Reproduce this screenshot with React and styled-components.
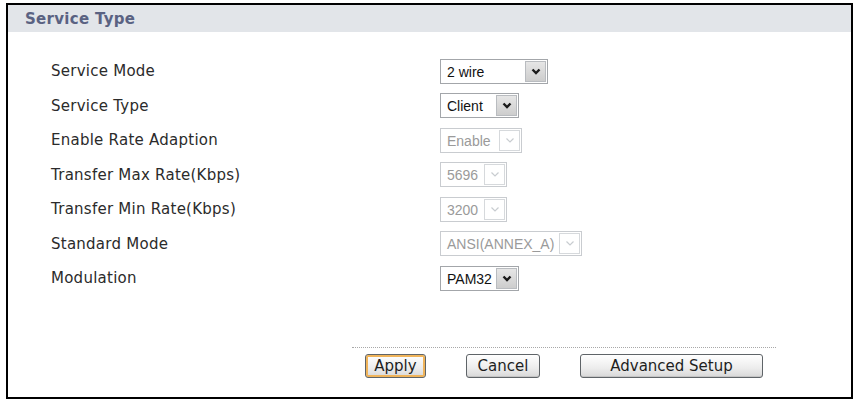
import React from 'react';
import styled, { createGlobalStyle } from 'styled-components';

const GlobalStyle = createGlobalStyle`
  html, body {
    margin: 0;
    padding: 0;
    background: #ffffff;
  }
  body {
    width: 856px;
    height: 401px;
    overflow: hidden;
  }
`;

const rows = [
  { label: 'Service Mode', value: '2 wire', width: 108 },
  { label: 'Service Type', value: 'Client', width: 79 },
  { label: 'Enable Rate Adaption', value: 'Enable', width: 82, disabled: true },
  { label: 'Transfer Max Rate(Kbps)', value: '5696', width: 67, disabled: true },
  { label: 'Transfer Min Rate(Kbps)', value: '3200', width: 67, disabled: true },
  { label: 'Standard Mode', value: 'ANSI(ANNEX_A)', width: 142, disabled: true },
  { label: 'Modulation', value: 'PAM32', width: 79 },
];

function Select({ value, width, disabled }) {
  return (
    <SelectBox $disabled={disabled} style={{ width }}>
      <SelectValue $disabled={disabled}>{value}</SelectValue>
      <ArrowButton $disabled={disabled}>
        <svg width="10" height="7" viewBox="0 0 10 7">
          <polyline
            points="1.5,1.5 5,5 8.5,1.5"
            fill="none"
            stroke={disabled ? '#c8ccd0' : '#1a1a1a'}
            strokeWidth={disabled ? 1.2 : 2.4}
          />
        </svg>
      </ArrowButton>
    </SelectBox>
  );
}

export default function App() {
  return (
    <>
      <GlobalStyle />
      <Frame>
        <Header>Service Type</Header>
        <Form>
          {rows.map((r) => (
            <Row key={r.label}>
              <Label>{r.label}</Label>
              <Select value={r.value} width={r.width} disabled={r.disabled} />
            </Row>
          ))}
        </Form>
        <Footer>
          <Button $primary>Apply</Button>
          <Button>Cancel</Button>
          <Button $wide>Advanced Setup</Button>
        </Footer>
      </Frame>
    </>
  );
}

const Frame = styled.div`
  box-sizing: border-box;
  margin: 3px 0 0 6px;
  width: 847px;
  height: 396px;
  border: 2px solid #000;
  display: flex;
  flex-direction: column;
  font-family: 'DejaVu Sans', Verdana, sans-serif;
`;

const Header = styled.div`
  height: 27px;
  background: #e2e5e9;
  color: #5a6282;
  font-weight: bold;
  font-size: 15px;
  letter-spacing: 0.3px;
  line-height: 28px;
  padding-left: 17px;
`;

const Form = styled.div`
  padding: 22px 0 0 43px;
  display: flex;
  flex-direction: column;
`;

const Row = styled.div`
  display: grid;
  grid-template-columns: 389px auto;
  align-items: center;
  height: 34.5px;
`;

const Label = styled.span`
  font-size: 15px;
  letter-spacing: 0.25px;
  color: #2b2b2b;
`;

const SelectBox = styled.div`
  box-sizing: border-box;
  height: 25px;
  display: flex;
  align-items: stretch;
  justify-content: space-between;
  border: 1px solid ${(p) => (p.$disabled ? '#c9ccd0' : '#a3a6aa')};
  background: #fff;
  padding: 1px;
`;

const SelectValue = styled.span`
  font-family: 'Liberation Sans', Arial, sans-serif;
  font-size: 14px;
  line-height: 22px;
  padding-left: 5px;
  white-space: nowrap;
  color: ${(p) => (p.$disabled ? '#9a9a9a' : '#111')};
`;

const ArrowButton = styled.span`
  box-sizing: border-box;
  flex: none;
  width: 21px;
  display: flex;
  align-items: center;
  justify-content: center;
  border: 1px solid ${(p) => (p.$disabled ? '#d6d9dc' : '#b9bcc0')};
  background: ${(p) =>
    p.$disabled ? '#fff' : 'linear-gradient(#e6e6e6, #cdcdcd)'};
`;

const Footer = styled.div`
  margin: auto 0 19px 344px;
  width: 411px;
  border-top: 1px dotted #a8a8a8;
  padding: 6px 0 0 13px;
  display: flex;
  gap: 40px;
`;

const Button = styled.button`
  box-sizing: border-box;
  height: 24px;
  width: ${(p) => (p.$wide ? '183px' : p.$primary ? '61px' : '74px')};
  font-family: 'DejaVu Sans', Verdana, sans-serif;
  font-size: 15px;
  color: #1e1e1e;
  padding: 0;
  border: 1px solid #5f6468;
  border-radius: 3px;
  background: linear-gradient(#ffffff, #ececec 60%, #d8d8d8);
  box-shadow: ${(p) =>
    p.$primary ? 'inset 0 0 0 2px #f0b45a' : 'inset 0 -1px 0 #c4c4c4'};
`;
